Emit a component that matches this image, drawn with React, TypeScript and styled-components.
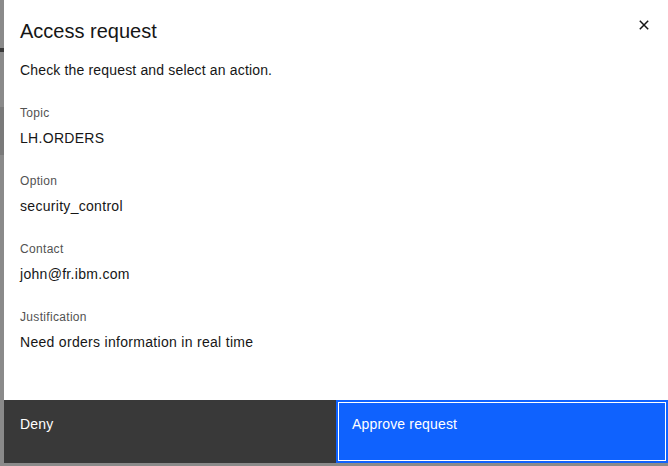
import React from "react";
import styled, { createGlobalStyle } from "styled-components";

const Global = createGlobalStyle`
  html, body { margin: 0; padding: 0; }
  body { font-family: "Liberation Sans", Arial, sans-serif; }
  * { box-sizing: border-box; }
`;

const Backdrop = styled.div`
  width: 668px;
  height: 466px;
  background: #8a8a8a;
  display: flex;
  padding: 0 0 3px 4px;
  position: relative;
  overflow: hidden;
`;

const BgBand = styled.div<{ $top: number; $h: number; $c: string }>`
  position: absolute;
  left: 0;
  width: 4px;
  top: ${(p) => p.$top}px;
  height: ${(p) => p.$h}px;
  background: ${(p) => p.$c};
`;

const Modal = styled.div`
  flex: 1;
  background: #ffffff;
  display: flex;
  flex-direction: column;
  position: relative;
`;

const Header = styled.div`
  padding: 17px 48px 0 16px;
`;

const Title = styled.h2`
  margin: 0;
  font-size: 20px;
  line-height: 28px;
  font-weight: 400;
  color: #161616;
  letter-spacing: 0;
`;

const CloseButton = styled.button`
  position: absolute;
  top: 1px;
  right: 0;
  width: 48px;
  height: 48px;
  border: none;
  background: transparent;
  display: flex;
  align-items: center;
  justify-content: center;
  padding: 0;
  cursor: pointer;
`;

const Body = styled.div`
  flex: 1;
  padding: 15px 16px 0 16px;
`;

const Intro = styled.p`
  margin: 0 0 25px 0;
  font-size: 14px;
  line-height: 20px;
  color: #161616;
  letter-spacing: 0.16px;
`;

const Field = styled.div`
  display: flex;
  flex-direction: column;
  margin-bottom: 25px;
`;

const Label = styled.div`
  font-size: 12px;
  line-height: 16px;
  color: #525252;
  letter-spacing: 0.32px;
  margin-bottom: 7px;
`;

const Value = styled.div`
  font-size: 14px;
  line-height: 20px;
  color: #161616;
  letter-spacing: 0.3px;
`;

const Footer = styled.div`
  display: flex;
  height: 63px;
`;

const FooterButton = styled.button<{ $kind: "secondary" | "primary" }>`
  flex: 1;
  border: none;
  margin: 0;
  text-align: left;
  display: flex;
  align-items: flex-start;
  padding: 14px 16px;
  font-family: inherit;
  font-size: 14px;
  line-height: 20px;
  letter-spacing: 0.16px;
  color: #ffffff;
  background: ${(p) => (p.$kind === "primary" ? "#0f62fe" : "#393939")};
  box-shadow: ${(p) =>
    p.$kind === "primary" ? "inset 0 0 0 2px #0f62fe, inset 0 0 0 3px #ffffff" : "none"};
  cursor: pointer;
`;

const fields = [
  { label: "Topic", value: "LH.ORDERS" },
  { label: "Option", value: "security_control" },
  { label: "Contact", value: "john@fr.ibm.com" },
  { label: "Justification", value: "Need orders information in real time" },
];

export default function App() {
  return (
    <>
      <Global />
      <Backdrop>
        <BgBand $top={48} $h={4} $c="#3a3a3a" />
        <BgBand $top={107} $h={48} $c="#7a7a7a" />
        <Modal>
          <Header>
            <Title>Access request</Title>
          </Header>
          <CloseButton aria-label="Close">
            <svg width="16" height="16" viewBox="0 0 16 16">
              <path d="M3.8 3.8 L12.2 12.2 M12.2 3.8 L3.8 12.2" stroke="#161616" strokeWidth="1.5" fill="none" />
            </svg>
          </CloseButton>
          <Body>
            <Intro>Check the request and select an action.</Intro>
            {fields.map((f) => (
              <Field key={f.label}>
                <Label>{f.label}</Label>
                <Value>{f.value}</Value>
              </Field>
            ))}
          </Body>
          <Footer>
            <FooterButton $kind="secondary">Deny</FooterButton>
            <FooterButton $kind="primary">Approve request</FooterButton>
          </Footer>
        </Modal>
      </Backdrop>
    </>
  );
}
